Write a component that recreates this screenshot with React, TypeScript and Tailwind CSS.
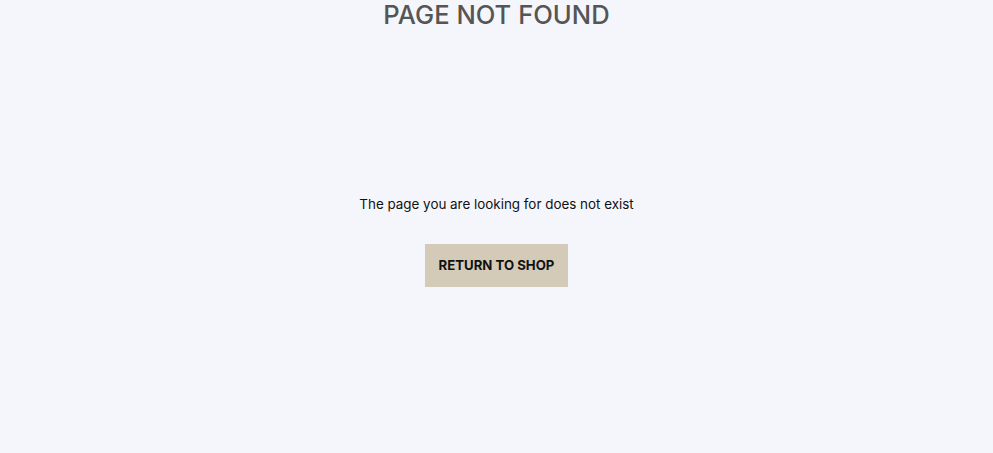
import React from 'react';

export default function App() {
  return (
    <div className="min-h-screen w-full bg-[#f5f6fb] flex flex-col items-center" style={{ fontFamily: 'Inter, "Noto Sans", sans-serif' }}>
      <h1 className="text-[25.6px] leading-[30px] font-medium text-[#555555] tracking-normal">PAGE NOT FOUND</h1>
      <div className="flex flex-col items-center pt-[166px]">
        <p className="text-[13.4px] leading-[16px] text-[#111111]">The page you are looking for does not exist</p>
        <button className="mt-[32px] w-[143px] h-[43px] bg-[#d3cbb8] text-[13.2px] font-bold text-[#111111] tracking-normal">
          RETURN TO SHOP
        </button>
      </div>
    </div>
  );
}
